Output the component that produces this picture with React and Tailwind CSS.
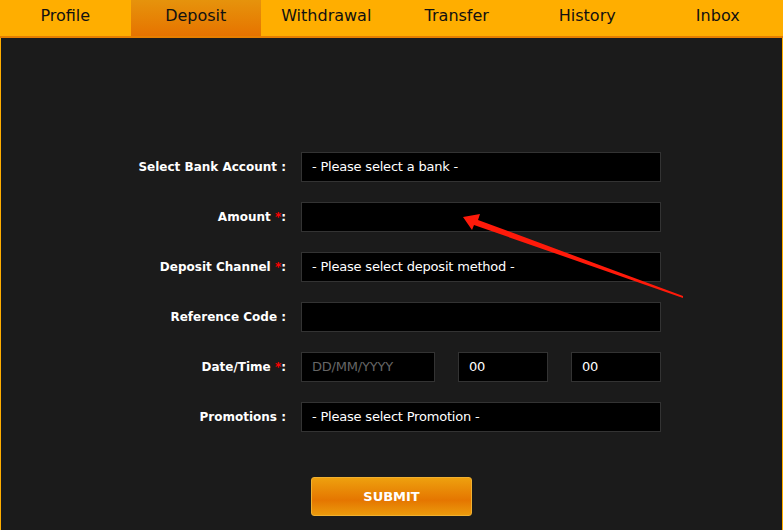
import React from "react";

const tabs = ["Profile", "Deposit", "Withdrawal", "Transfer", "History", "Inbox"];

const font = { fontFamily: '"DejaVu Sans", Tahoma, sans-serif' };

function Label({ text, required }) {
  return (
    <div className="w-[285px] shrink-0 text-right text-[12px] font-bold text-white">
      {text}
      {required ? (
        <>
          {" "}
          <span className="text-[#ff0000]">*</span>:
        </>
      ) : (
        " :"
      )}
    </div>
  );
}

function Box({ children, className = "w-[360px]", muted }) {
  return (
    <div
      className={`h-[30px] ${className} flex items-center border border-[#333333] bg-black px-[10px] text-[13px] tracking-[-0.2px] ${
        muted ? "text-[#666666]" : "text-white"
      }`}
    >
      {children}
    </div>
  );
}

function Row({ label, required, children }) {
  return (
    <div className="flex items-center gap-[15px]">
      <Label text={label} required={required} />
      {children}
    </div>
  );
}

export default function App() {
  return (
    <div className="relative h-[530px] w-[783px] overflow-hidden bg-[#ffae00]" style={font}>
      {/* nav tabs */}
      <div className="flex h-[38px] border-b-2 border-[#e67e00]">
        {tabs.map((t) => (
          <div
            key={t}
            className={`flex flex-1 items-center justify-center pb-[4px] text-[16px] text-[#111111] ${
              t === "Deposit" ? "bg-gradient-to-b from-[#e6930c] to-[#e67300]" : ""
            }`}
          >
            {t}
          </div>
        ))}
      </div>

      {/* panel */}
      <div className="ml-[1px] mr-[1px] h-[492px] bg-[#1b1b1b] pt-[114px]">
        <div className="flex flex-col gap-[20px]">
          <Row label="Select Bank Account">
            <Box>- Please select a bank -</Box>
          </Row>
          <Row label="Amount" required>
            <Box />
          </Row>
          <Row label="Deposit Channel" required>
            <Box>- Please select deposit method -</Box>
          </Row>
          <Row label="Reference Code">
            <Box />
          </Row>
          <Row label="Date/Time" required>
            <div className="flex w-[360px] justify-between">
              <Box className="w-[134px]" muted>
                DD/MM/YYYY
              </Box>
              <Box className="w-[90px]">00</Box>
              <Box className="w-[90px]">00</Box>
            </div>
          </Row>
          <Row label="Promotions">
            <Box>- Please select Promotion -</Box>
          </Row>
        </div>

        <div className="mt-[45px] flex justify-center">
          <button className="h-[39px] w-[161px] rounded-[3px] border border-[#f0b030] bg-[linear-gradient(to_bottom,#eea00e,#e57600_60%,#eb9a0c)] text-[13px] font-bold text-white">
            SUBMIT
          </button>
        </div>
      </div>

      {/* annotation arrow */}
      <svg className="pointer-events-none absolute left-0 top-0" width="783" height="530">
        <polygon
          points="463,217 480,214 478,220 683,296 683,298 474,225 472,230"
          fill="#ff1a0a"
        />
      </svg>
    </div>
  );
}
